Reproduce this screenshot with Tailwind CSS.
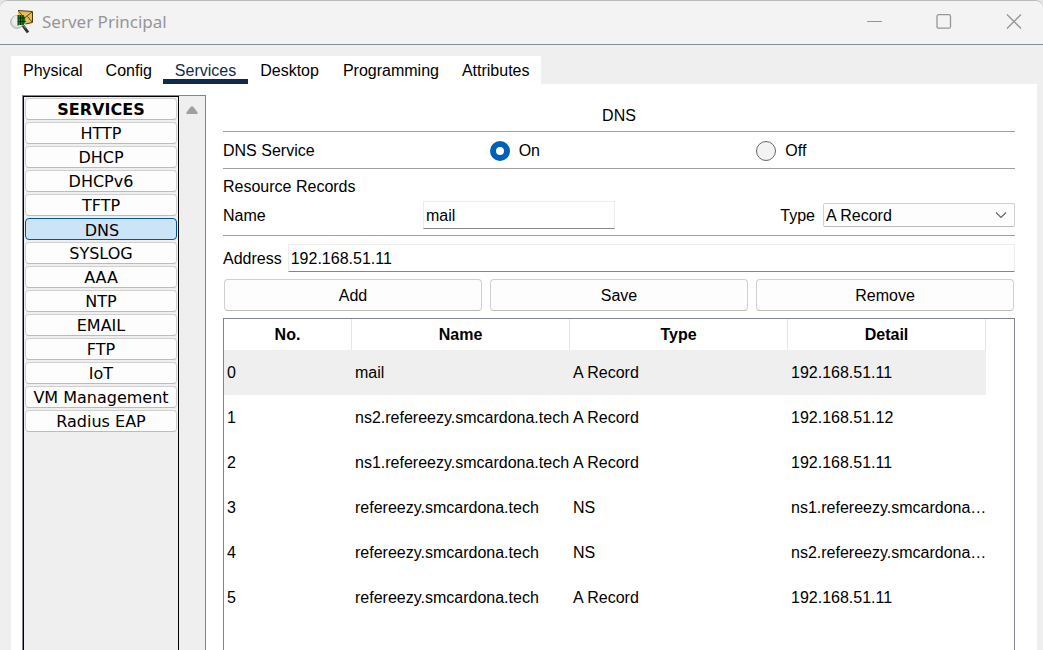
<!DOCTYPE html>
<html lang="en">
<head>
<meta charset="utf-8">
<title>Server Principal</title>
<script src="https://cdn.jsdelivr.net/npm/@tailwindcss/browser@4"></script>
</head>
<body class="bg-[#e6e6e6] font-['Liberation_Sans',Arial,sans-serif] text-base leading-6 text-black">
<div class="flex h-screen flex-col overflow-hidden rounded-t-lg border-t border-[#bababa] bg-[#efefef]">

  <header class="flex h-11 shrink-0 items-center border-b border-[#848b94] bg-[#f3f3f3] pr-[21px] pb-0.5 pl-2.5">
    <svg class="size-6 shrink-0" viewBox="0 0 24 24" aria-hidden="true">
      <circle cx="7" cy="12" r="6.300" fill="#dedede" stroke="#a9a9a9"/>
      <path d="M2.500 8.500Q4.500 5.500 7.500 5.500V16Q3.500 15.500 2.500 12z" fill="#ededed"/>
      <path d="M8 0.500 22.500 1.500V12.500L15.500 14H8z" fill="#e9bd55"/>
      <path d="M8 0.500 22.500 1.500V12.500L15.500 14" fill="none" stroke="#4a3a12"/>
      <path d="M8.500 1 14.500 8 22 2M22 12 17.500 6.500" fill="none" stroke="#5b4617"/>
      <path d="M8 5H13.500Q16 8 15.500 12L13.500 15H8z" fill="#16861d"/>
      <path d="M8 8H15M8 11.500H15.500M10.500 5V15M13 5V15" stroke="#062d08" fill="none"/>
      <path d="M8 5V15.500" stroke="#0b3d0d" fill="none"/>
      <path d="M13 15.500 18 22.500" stroke="#333" stroke-width="3" fill="none"/>
      <path d="M13 15 16 18.500" stroke="#999" fill="none"/>
    </svg>
    <h1 class="ml-2 flex-1 font-['Noto_Sans','Open_Sans',sans-serif] text-[17px] text-[#969696]">Server Principal</h1>
    <div class="flex items-center gap-[54px]">
      <button type="button" aria-label="Minimize" class="size-4">
        <svg class="size-4" viewBox="0 0 16 16" fill="none" stroke="#969696"><path d="M1 7.500H16"/></svg>
      </button>
      <button type="button" aria-label="Maximize" class="size-4">
        <svg class="size-4" viewBox="0 0 16 16" fill="none" stroke="#969696" stroke-width="1.300"><rect x="1" y="0.700" width="13.500" height="13.500" rx="1.500"/></svg>
      </button>
      <button type="button" aria-label="Close" class="size-4">
        <svg class="size-4" viewBox="0 0 16 16" fill="none" stroke="#969696" stroke-width="1.300"><path d="M1 0.500 15 14.500M15 0.500 1 14.500"/></svg>
      </button>
    </div>
  </header>

  <div class="flex min-h-0 flex-1 flex-col pt-[11px] pr-1.5 pl-[11px]">
    <nav class="flex h-7 shrink-0 self-start bg-white">
      <a href="#" class="pt-[3px] pr-[11px] pl-3">Physical</a>
      <a href="#" class="pt-[3px] pr-[11px] pl-3">Config</a>
      <a href="#" aria-current="page" class="border-b-[5px] border-[#0f2a4f] pt-[3px] pr-3 pl-3 text-[#0f2a4f]">Services</a>
      <a href="#" class="pt-[3px] pr-3 pl-3">Desktop</a>
      <a href="#" class="pt-[3px] pr-[11px] pl-3">Programming</a>
      <a href="#" class="pt-[3px] pr-[11px] pl-3">Attributes</a>
    </nav>

    <div class="flex min-h-0 flex-1 bg-white pt-[11px] pr-[22px] pl-[11px]">
      <aside class="flex w-46 shrink-0 border-x border-t border-[#7f848d] bg-[#efefef]">
        <div class="flex flex-1 flex-col gap-0.5 border-x border-t border-black px-px pt-px font-['DejaVu_Sans',Verdana,sans-serif]">
          <button type="button" class="h-[22px] w-full rounded-sm border border-[#d0d0d0] border-b-[#bbb] bg-[#fdfdfd] pt-0.5 leading-4 font-bold">SERVICES</button>
          <button type="button" class="h-[22px] w-full rounded-sm border border-[#d0d0d0] border-b-[#bbb] bg-[#fdfdfd] pt-0.5 leading-4">HTTP</button>
          <button type="button" class="h-[22px] w-full rounded-sm border border-[#d0d0d0] border-b-[#bbb] bg-[#fdfdfd] pt-0.5 leading-4">DHCP</button>
          <button type="button" class="h-[22px] w-full rounded-sm border border-[#d0d0d0] border-b-[#bbb] bg-[#fdfdfd] pt-0.5 leading-4">DHCPv6</button>
          <button type="button" class="h-[22px] w-full rounded-sm border border-[#d0d0d0] border-b-[#bbb] bg-[#fdfdfd] pt-0.5 leading-4">TFTP</button>
          <button type="button" aria-pressed="true" class="h-[22px] w-full rounded-sm border border-[#0054a0] bg-[#cce4f7] pt-1 pl-0.5 leading-4">DNS</button>
          <button type="button" class="h-[22px] w-full rounded-sm border border-[#d0d0d0] border-b-[#bbb] bg-[#fdfdfd] pt-0.5 leading-4">SYSLOG</button>
          <button type="button" class="h-[22px] w-full rounded-sm border border-[#d0d0d0] border-b-[#bbb] bg-[#fdfdfd] pt-0.5 leading-4">AAA</button>
          <button type="button" class="h-[22px] w-full rounded-sm border border-[#d0d0d0] border-b-[#bbb] bg-[#fdfdfd] pt-0.5 leading-4">NTP</button>
          <button type="button" class="h-[22px] w-full rounded-sm border border-[#d0d0d0] border-b-[#bbb] bg-[#fdfdfd] pt-0.5 leading-4">EMAIL</button>
          <button type="button" class="h-[22px] w-full rounded-sm border border-[#d0d0d0] border-b-[#bbb] bg-[#fdfdfd] pt-0.5 leading-4">FTP</button>
          <button type="button" class="h-[22px] w-full rounded-sm border border-[#d0d0d0] border-b-[#bbb] bg-[#fdfdfd] pt-0.5 leading-4">IoT</button>
          <button type="button" class="h-[22px] w-full rounded-sm border border-[#d0d0d0] border-b-[#bbb] bg-[#fdfdfd] pt-0.5 leading-4">VM Management</button>
          <button type="button" class="h-[22px] w-full rounded-sm border border-[#d0d0d0] border-b-[#bbb] bg-[#fdfdfd] pt-0.5 leading-4">Radius EAP</button>
        </div>
        <div class="flex w-[26px] justify-center pt-2.5">
          <svg class="h-2 w-3" viewBox="0 0 12 8" fill="#a0a0a0" aria-hidden="true"><path d="M4.800 0.700Q6-0.400 7.200 0.700L11.300 6Q12.200 8 10.500 8H1.500Q-0.200 8 0.700 6z"/></svg>
        </div>
      </aside>

      <main class="ml-[17px] flex min-w-0 flex-1 flex-col">
        <h2 class="flex h-9 items-center justify-center pt-1.5">DNS</h2>
        <fieldset aria-label="DNS Service" class="grid shrink-0 grid-cols-3 items-center gap-2 border-y border-[#a0a0a0] pt-[7px] pb-[5px]">
          <span>DNS Service</span>
          <label class="flex items-center gap-[9px]"><input type="radio" name="dns" checked class="size-5 appearance-none rounded-full border border-[#666] bg-[#f3f3f3] checked:border-[6px] checked:border-[#005fb8] checked:bg-white">On</label>
          <label class="flex items-center gap-[9px]"><input type="radio" name="dns" class="size-5 appearance-none rounded-full border border-[#666] bg-[#f3f3f3] checked:border-[6px] checked:border-[#005fb8] checked:bg-white">Off</label>
        </fieldset>
        <h3 class="pt-1.5">Resource Records</h3>
        <div class="grid grid-cols-4 items-center gap-2 border-b border-[#a0a0a0] pt-0.5 pb-1.5">
          <label for="name" class="pt-0.5">Name</label>
          <input id="name" type="text" value="mail" class="h-7 w-full border border-[#ececec] border-b-[#868686] bg-white px-0.5 pt-0.5 outline-none">
          <label for="type" class="pt-0.5 text-right">Type</label>
          <div class="grid items-center">
            <select id="type" class="col-start-1 row-start-1 h-6 w-full appearance-none rounded-xs border border-[#d0d0d0] border-b-[#bbb] bg-[#fdfdfd] px-0.5 pt-0.5 leading-5">
              <option>A Record</option>
              <option>NS</option>
            </select>
            <svg class="pointer-events-none col-start-1 row-start-1 mr-2 h-3 w-3 justify-self-end" viewBox="0 0 12 12" fill="none" stroke="#666" stroke-width="1.200" aria-hidden="true"><path d="M1 3.500 6 8.500 11 3.500"/></svg>
          </div>
        </div>
        <div class="flex items-center gap-1.5 pt-2">
          <label for="address" class="pt-0.5">Address</label>
          <input id="address" type="text" value="192.168.51.11" class="h-7 min-w-0 flex-1 border border-[#ececec] border-b-[#868686] bg-white px-0.5 pt-0.5 outline-none">
        </div>
        <div class="grid grid-cols-3 gap-2 px-px py-[7px]">
          <button type="button" class="h-8 rounded border border-[#d0d0d0] border-b-[#bbb] bg-[#fdfdfd] pt-0.5">Add</button>
          <button type="button" class="h-8 rounded border border-[#d0d0d0] border-b-[#bbb] bg-[#fdfdfd] pt-0.5">Save</button>
          <button type="button" class="h-8 rounded border border-[#d0d0d0] border-b-[#bbb] bg-[#fdfdfd] pt-0.5">Remove</button>
        </div>
        <div class="min-h-0 flex-1 overflow-hidden border-x border-t border-[#7f848d]">
          <table class="w-[762px] table-fixed border-separate border-spacing-0">
            <colgroup><col class="w-32"><col class="w-[218px]"><col class="w-[218px]"><col class="w-[198px]"></colgroup>
            <thead>
              <tr class="h-[31px]">
                <th class="border-r border-[#e5e5e5]">No.</th>
                <th class="border-r border-[#e5e5e5]">Name</th>
                <th class="border-r border-[#e5e5e5]">Type</th>
                <th class="border-r border-[#e5e5e5]">Detail</th>
              </tr>
            </thead>
            <tbody>
              <tr class="h-[45px] bg-[#efefef]"><td class="pl-[3px]">0</td><td class="pl-[3px]">mail</td><td class="pl-[3px]">A Record</td><td class="pl-[3px] whitespace-nowrap">192.168.51.11</td></tr>
              <tr class="h-[45px]"><td class="pl-[3px]">1</td><td class="pl-[3px]">ns2.refereezy.smcardona.tech</td><td class="pl-[3px]">A Record</td><td class="pl-[3px] whitespace-nowrap">192.168.51.12</td></tr>
              <tr class="h-[45px]"><td class="pl-[3px]">2</td><td class="pl-[3px]">ns1.refereezy.smcardona.tech</td><td class="pl-[3px]">A Record</td><td class="pl-[3px] whitespace-nowrap">192.168.51.11</td></tr>
              <tr class="h-[45px]"><td class="pl-[3px]">3</td><td class="pl-[3px]">refereezy.smcardona.tech</td><td class="pl-[3px]">NS</td><td class="pl-[3px] whitespace-nowrap">ns1.refereezy.smcardona…</td></tr>
              <tr class="h-[45px]"><td class="pl-[3px]">4</td><td class="pl-[3px]">refereezy.smcardona.tech</td><td class="pl-[3px]">NS</td><td class="pl-[3px] whitespace-nowrap">ns2.refereezy.smcardona…</td></tr>
              <tr class="h-[45px]"><td class="pl-[3px]">5</td><td class="pl-[3px]">refereezy.smcardona.tech</td><td class="pl-[3px]">A Record</td><td class="pl-[3px] whitespace-nowrap">192.168.51.11</td></tr>
            </tbody>
          </table>
        </div>
      </main>
    </div>
  </div>
</div>
</body>
</html>
